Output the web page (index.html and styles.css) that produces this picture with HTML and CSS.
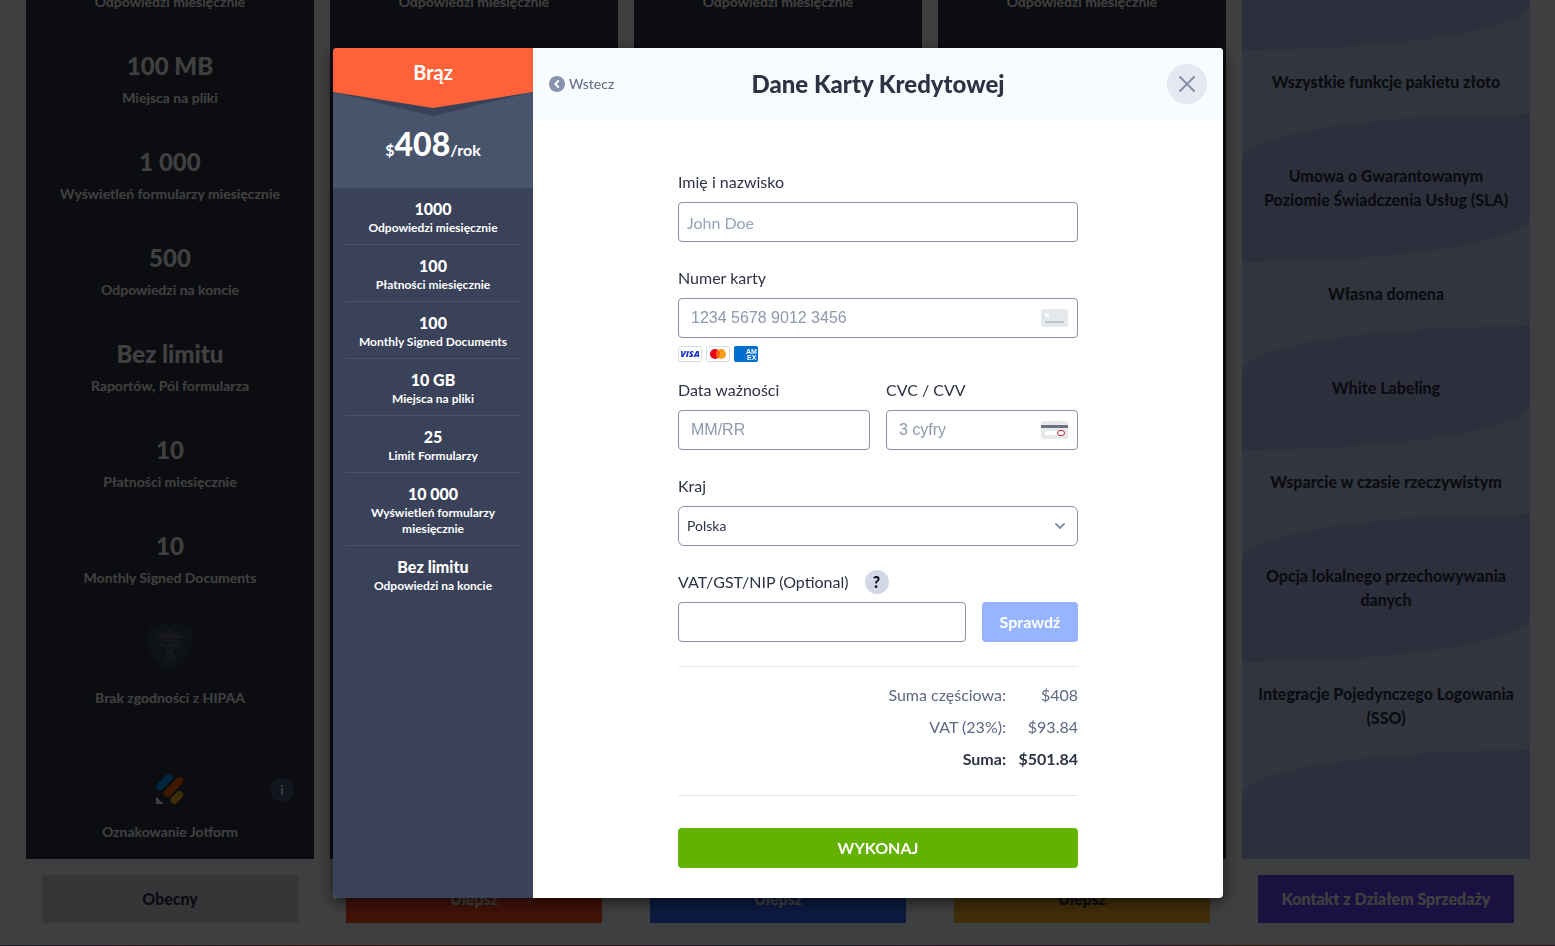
FILE: index.html
```
<!doctype html>
<html lang="pl">
  <head>
    <meta charset="UTF-8" />
    <meta name="viewport" content="width=device-width, initial-scale=1.0" />
    <title>Dane Karty Kredytowej</title>
    <link rel="stylesheet" href="styles.css">
  </head>
  <body>
    <!-- Plans table behind the modal -->
    <main class="plans">
      <section class="plan">
        <div class="plan-body">
          <div class="feature"><span class="feature-label">Odpowiedzi miesięcznie</span></div>
          <div class="feature"><strong class="feature-value">100 MB</strong><span class="feature-label">Miejsca na pliki</span></div>
          <div class="feature"><strong class="feature-value">1 000</strong><span class="feature-label">Wyświetleń formularzy miesięcznie</span></div>
          <div class="feature"><strong class="feature-value">500</strong><span class="feature-label">Odpowiedzi na koncie</span></div>
          <div class="feature"><strong class="feature-value">Bez limitu</strong><span class="feature-label">Raportów, Pól formularza</span></div>
          <div class="feature"><strong class="feature-value">10</strong><span class="feature-label">Płatności miesięcznie</span></div>
          <div class="feature"><strong class="feature-value">10</strong><span class="feature-label">Monthly Signed Documents</span></div>
          <div class="feature feature-hipaa">
            <svg class="hipaa-icon" width="44" height="48" viewBox="0 0 44 48">
              <path fill="#3a475a" d="M22 0 L44 6 V18 C44 32 35 43 22 48 C9 43 0 32 0 18 V6 Z"/>
              <circle cx="22" cy="10.5" r="2.6" fill="#5b6476"/>
              <path fill="#5b6476" d="M22 13 C19 10 16 9 14 11 C12 13 9 15 6 15 C9 17 17 17 21 17 V38 L22 39 L23 38 V17 C27 17 35 17 38 15 C35 15 32 13 30 11 C28 9 25 10 22 13 Z"/>
              <path fill="none" stroke="#5b6476" stroke-width="1.8" d="M20 19 C8 19 10 23 17 23.500 C24 24 27 26 25 29 C23 31 19 31 18 34 C17 36 18 38 20 38 M24 19 C36 19 34 23 27 23.500 C20 24 17 26 19 29 C21 31 25 31 26 34 C27 36 26 38 24 38"/>
            </svg>
            <span class="feature-label">Brak zgodności z HIPAA</span>
          </div>
          <div class="feature feature-brand">
            <svg class="brand-icon" width="28" height="30" viewBox="0 0 28 30">
              <g fill="none" stroke-width="7.600" stroke-linecap="round">
                <path stroke="#0099ff" d="M4 12.500 L13 3.800"/>
                <path stroke="#ff6100" d="M11.300 19.300 L23.300 7"/>
                <path stroke="#ffb629" d="M18.300 26 L23.300 21"/>
              </g>
              <path fill="#fff" d="M0 22.500 L7.500 30 H1.500 Q0 30 0 28.500 Z"/>
            </svg>
            <span class="feature-label">Oznakowanie Jotform</span>
            <button class="info-button" type="button">i</button>
          </div>
        </div>
        <div class="plan-footer"><button class="plan-button current" type="button">Obecny</button></div>
      </section>

      <section class="plan">
        <div class="plan-body">
          <div class="feature"><span class="feature-label">Odpowiedzi miesięcznie</span></div>
        </div>
        <div class="plan-footer"><button class="plan-button bronze" type="button">Ulepsz</button></div>
      </section>

      <section class="plan">
        <div class="plan-body">
          <div class="feature"><span class="feature-label">Odpowiedzi miesięcznie</span></div>
        </div>
        <div class="plan-footer"><button class="plan-button silver" type="button">Ulepsz</button></div>
      </section>

      <section class="plan">
        <div class="plan-body">
          <div class="feature"><span class="feature-label">Odpowiedzi miesięcznie</span></div>
        </div>
        <div class="plan-footer"><button class="plan-button gold" type="button">Ulepsz</button></div>
      </section>

      <section class="plan">
        <div class="plan-body enterprise">
          <div class="perk perk-first"></div>
          <div class="perk">Wszystkie funkcje pakietu złoto</div>
          <div class="perk wave">Umowa o Gwarantowanym Poziomie Świadczenia Usług (SLA)</div>
          <div class="perk">Własna domena</div>
          <div class="perk wave">White Labeling</div>
          <div class="perk">Wsparcie w czasie rzeczywistym</div>
          <div class="perk wave">Opcja lokalnego przechowywania danych</div>
          <div class="perk">Integracje Pojedynczego Logowania (SSO)</div>
          <div class="perk perk-last"></div>
        </div>
        <div class="plan-footer"><button class="plan-button contact" type="button">Kontakt z Działem Sprzedaży</button></div>
      </section>
    </main>
    <div class="page-line"></div>

    <!-- Modal -->
    <div class="overlay">
      <div class="modal" role="dialog" aria-labelledby="modal-title">
        <aside class="summary">
          <div class="summary-top">
            <div class="ribbon"><div class="ribbon-name">Brąz</div></div>
            <div class="price"><span>$</span><strong>408</strong><span>/rok</span></div>
          </div>
          <ul class="limits">
            <li><strong>1000</strong>Odpowiedzi miesięcznie</li>
            <li><strong>100</strong>Płatności miesięcznie</li>
            <li><strong>100</strong>Monthly Signed Documents</li>
            <li><strong>10 GB</strong>Miejsca na pliki</li>
            <li><strong>25</strong>Limit Formularzy</li>
            <li><strong>10 000</strong>Wyświetleń formularzy miesięcznie</li>
            <li><strong>Bez limitu</strong>Odpowiedzi na koncie</li>
          </ul>
        </aside>

        <div class="payment">
          <header class="payment-header">
            <button class="back-button" type="button">
              <svg width="16" height="16" viewBox="0 0 16 16">
                <circle cx="8" cy="8" r="8" fill="#8894ab"/>
                <path d="M9.300 5 L6.300 8 L9.300 11" fill="none" stroke="#fff" stroke-width="1.800" stroke-linecap="round" stroke-linejoin="round"/>
              </svg>
              Wstecz
            </button>
            <h1 class="payment-title" id="modal-title">Dane Karty Kredytowej</h1>
            <button class="close-button" type="button" aria-label="Zamknij">
              <svg width="16" height="16" viewBox="0 0 16 16">
                <path d="M1 1 L15 15 M15 1 L1 15" stroke="#8590aa" stroke-width="2" stroke-linecap="round"/>
              </svg>
            </button>
          </header>

          <form class="payment-form">
            <div class="field">
              <label for="name">Imię i nazwisko</label>
              <input class="input" id="name" type="text" placeholder="John Doe">
            </div>

            <div class="field field-card">
              <label for="card">Numer karty</label>
              <div class="input-wrap">
                <input class="input input-card" id="card" type="text" placeholder="1234 5678 9012 3456">
                <svg class="input-icon" width="27" height="18" viewBox="0 0 27 18">
                  <rect width="27" height="18" rx="3" fill="#e5e9ec"/>
                  <rect x="4" y="4" width="4" height="4" rx="1" fill="#fff"/>
                  <rect x="4" y="12" width="19" height="2" fill="#b9c4c9"/>
                </svg>
              </div>
              <div class="card-brands">
                <svg width="24" height="16" viewBox="0 0 24 16">
                  <rect x=".5" y=".5" width="23" height="15" rx="2" fill="#fff" stroke="#d6dcde"/>
                  <text class="visa" x="12" y="11" text-anchor="middle">VISA</text>
                </svg>
                <svg width="24" height="16" viewBox="0 0 24 16">
                  <rect x=".5" y=".5" width="23" height="15" rx="2" fill="#fff" stroke="#d6dcde"/>
                  <circle cx="9" cy="8" r="5" fill="#eb001b"/>
                  <circle cx="15" cy="8" r="5" fill="#f79e1b"/>
                  <path d="M12 4 A5 5 0 0 1 12 12 A5 5 0 0 1 12 4" fill="#ff5f00"/>
                </svg>
                <svg width="24" height="16" viewBox="0 0 24 16">
                  <rect width="24" height="16" rx="2" fill="#016fd0"/>
                  <text class="amex" x="12" y="8">AM</text>
                  <text class="amex" x="13" y="14">EX</text>
                </svg>
              </div>
            </div>

            <div class="field-row">
              <div class="field">
                <label for="expiry">Data ważności</label>
                <input class="input input-card" id="expiry" type="text" placeholder="MM/RR">
              </div>
              <div class="field">
                <label for="cvc">CVC / CVV</label>
                <div class="input-wrap">
                  <input class="input input-card" id="cvc" type="text" placeholder="3 cyfry">
                  <svg class="input-icon" width="27" height="18" viewBox="0 0 27 18">
                    <rect width="27" height="18" rx="3" fill="#e5e9ec"/>
                    <rect y="4" width="27" height="3" fill="#6b7280"/>
                    <rect x="4" y="10" width="14" height="4" fill="#fff"/>
                    <rect x="16.500" y="9.500" width="7" height="5" rx="2.500" fill="#fff" stroke="#c92a2f"/>
                  </svg>
                </div>
              </div>
            </div>

            <div class="field">
              <label for="country">Kraj</label>
              <div class="input-wrap">
                <select class="input select" id="country">
                  <option>Polska</option>
                </select>
                <svg class="select-arrow" width="12" height="8" viewBox="0 0 12 8">
                  <path d="M2 2 L6 6 L10 2" fill="none" stroke="#8894ab" stroke-width="2" stroke-linecap="round" stroke-linejoin="round"/>
                </svg>
              </div>
            </div>

            <div class="field">
              <div class="label-row">
                <label for="vat">VAT/GST/NIP (Optional)</label>
                <button class="help-button" type="button">?</button>
              </div>
              <div class="vat-row">
                <input class="input" id="vat" type="text">
                <button class="check-button" type="button">Sprawdź</button>
              </div>
            </div>

            <div class="totals">
              <table>
                <tr><th scope="row">Suma częściowa:</th><td>$408</td></tr>
                <tr><th scope="row">VAT (23%):</th><td>$93.84</td></tr>
                <tr class="total"><th scope="row">Suma:</th><td>$501.84</td></tr>
              </table>
            </div>

            <button class="submit-button" type="submit">WYKONAJ</button>
          </form>
        </div>
      </div>
    </div>
  </body>
</html>
```
FILE: styles.css
```
* {
  margin: 0;
  padding: 0;
  box-sizing: border-box;
}

body {
  font-family: Lato, "Open Sans", sans-serif;
  font-size: 16px;
  line-height: 24px;
  background: #f8fafd;
  color: #2c3345;
  overflow: hidden;
}

button,
input,
select {
  font: inherit;
}

button {
  border: none;
  cursor: pointer;
}

/* Plans */
.plans {
  display: grid;
  grid-template-columns: repeat(5, 1fr);
  gap: 16px;
  padding: 0 25px 0 26px;
  margin-top: -6px;
}

.plan {
  display: flex;
  flex-direction: column;
}

.plan-body {
  flex: 1;
  padding: 0 20px;
  background: #2c3442;
  color: #fff;
  text-align: center;
}

.feature {
  display: flex;
  flex-direction: column;
  align-items: center;
  gap: 8px;
  padding: 20px 0 19px;
  border-bottom: 1px solid #3c4454;
}

.feature:first-child {
  padding-top: 0;
}

.feature-value {
  font-size: 24px;
  line-height: 32px;
  font-weight: 900;
}

.feature-label {
  font-size: 14px;
  line-height: 16px;
  font-weight: bold;
}

.feature-hipaa {
  gap: 20px;
  padding: 16px 0 43px;
}

.feature-brand {
  position: relative;
  gap: 20px;
  padding: 24px 0 19px;
  border-bottom: none;
}

.info-button {
  position: absolute;
  top: 28px;
  right: 0;
  width: 24px;
  height: 24px;
  border-radius: 50%;
  background: #4a5473;
  color: #fff;
  font-size: 14px;
  font-weight: bold;
}

.plan-footer {
  padding: 16px 16px 22px;
}

.plan-button {
  width: 100%;
  height: 48px;
  font-weight: 900;
  color: #fff;
}

.plan-button.current {
  background: #d5d8e0;
  color: #2c3345;
}

.plan-button.bronze {
  background: #ff4b1f;
}

.plan-button.silver {
  background: #2e69ff;
}

.plan-button.gold {
  background: #ffb629;
  color: #2c3345;
}

.plan-button.contact {
  background: #6a44ff;
}

/* Enterprise column */
.enterprise {
  padding: 0;
  background: #c8d4f4;
  color: #2c3345;
  font-weight: 900;
}

.perk {
  padding: 20px 8px;
}

.wave,
.perk-first,
.perk-last {
  background: #b8bcf0;
}

.wave {
  padding: 50px 14px;
  border-radius: 100% 0 100% 0 / 46px 0 46px 0;
}

.perk-first {
  height: 56px;
  border-radius: 0 0 100% 0 / 0 0 46px 0;
}

.perk-last {
  height: 109px;
  border-radius: 100% 0 0 0 / 46px 0 0 0;
}

.page-line {
  height: 1px;
  background: linear-gradient(90deg, #5a6080, #d0304a 22%, #555a78 50%, #c04a80 75%, #d06a30 85%, #c04a80);
}

/* Modal */
.overlay {
  position: fixed;
  inset: 0;
  display: flex;
  align-items: center;
  justify-content: center;
  padding-left: 1px;
  background: rgba(0, 0, 0, 0.75);
}

.modal {
  display: grid;
  grid-template-columns: 200px 1fr;
  width: 890px;
  max-width: 100%;
  border-radius: 4px;
  overflow: hidden;
  background: #fff;
  box-shadow: 0 4px 16px rgba(0, 0, 0, 0.6);
}

.summary {
  background: #3a4259;
  color: #fff;
  text-align: center;
}

.summary-top {
  height: 140px;
  background: #48546b;
}

.ribbon {
  height: 68px;
  background: #3a4259;
  clip-path: polygon(0 0, 100% 0, 100% 44px, 50% 68px, 0 44px);
}

.ribbon-name {
  height: 60px;
  padding-top: 12px;
  background: #ff6138;
  clip-path: polygon(0 0, 100% 0, 100% 44px, 50% 60px, 0 44px);
  font-size: 20px;
  font-weight: bold;
}

.price {
  padding-top: 8px;
  line-height: 40px;
  font-weight: bold;
}

.price strong {
  font-size: 32px;
  font-weight: 900;
}

.limits {
  padding: 0 12px;
  list-style: none;
}

.limits li {
  padding: 12px 8px 8px;
  border-bottom: 1px solid #48546b;
  font-size: 12px;
  line-height: 16px;
  font-weight: bold;
}

.limits li:last-child {
  border-bottom: none;
}

.limits strong {
  display: block;
  margin-bottom: 2px;
  font-size: 16px;
  line-height: 18px;
  font-weight: 900;
}

.payment-header {
  display: grid;
  grid-template-columns: 1fr auto 1fr;
  align-items: center;
  height: 72px;
  padding: 0 16px;
  background: #f8fbff;
}

.back-button {
  display: flex;
  align-items: center;
  justify-self: start;
  gap: 4px;
  background: none;
  color: #5d6885;
  font-size: 14px;
}

.payment-title {
  font-size: 24px;
  line-height: 32px;
  font-weight: 900;
}

.close-button {
  display: flex;
  align-items: center;
  justify-content: center;
  justify-self: end;
  width: 40px;
  height: 40px;
  border-radius: 50%;
  background: #e4e8f0;
}

/* Form */
.payment-form {
  width: 400px;
  max-width: 100%;
  margin: 0 auto;
  padding: 50px 0 30px;
}

.field {
  display: flex;
  flex-direction: column;
  gap: 8px;
  margin-bottom: 24px;
}

.field-card {
  margin-bottom: 16px;
}

.field-row {
  display: grid;
  grid-template-columns: 1fr 1fr;
  gap: 16px;
}

.input {
  width: 100%;
  height: 40px;
  padding: 0 8px;
  border: 1px solid #8894ab;
  border-radius: 4px;
  background: #fff;
  color: #2c3345;
}

.input::placeholder {
  color: #97a3bb;
}

.input-card {
  padding: 0 12px;
  font-family: "Liberation Sans", Arial, sans-serif;
}

.input-card::placeholder {
  color: #8c99b0;
}

.input-wrap {
  position: relative;
}

.input-icon {
  position: absolute;
  top: 11px;
  right: 10px;
}

.select {
  appearance: none;
  border-radius: 6px;
  font-size: 14px;
}

.select-arrow {
  position: absolute;
  top: 16px;
  right: 12px;
  pointer-events: none;
}

.card-brands {
  display: flex;
  gap: 4px;
}

.visa {
  font: italic 900 9px "Open Sans", sans-serif;
  fill: #1a2fc4;
}

.amex {
  font: bold 7px "Liberation Sans", Arial, sans-serif;
  fill: #fff;
}

.label-row {
  display: flex;
  gap: 16px;
}

.help-button {
  width: 24px;
  height: 24px;
  border-radius: 50%;
  background: #d3d8e6;
  color: #0a0d14;
  font-weight: 900;
}

.vat-row {
  display: flex;
  gap: 16px;
}

.check-button {
  flex: 0 0 96px;
  border-radius: 4px;
  background: #97b4ff;
  color: #fff;
  font-weight: bold;
}

.totals {
  margin-bottom: 32px;
  padding: 12px 0 20px;
  border-top: 1px solid #e4e8f0;
  border-bottom: 1px solid #e4e8f0;
}

.totals table {
  width: 100%;
  border-collapse: collapse;
  color: #5d6885;
  line-height: 32px;
  text-align: right;
}

.totals th {
  font-weight: normal;
}

.totals td {
  width: 72px;
}

.totals .total,
.totals .total th {
  color: #2c3345;
  font-weight: bold;
}

.submit-button {
  display: block;
  width: 100%;
  height: 40px;
  border-radius: 4px;
  background: #64b200;
  color: #fff;
  font-weight: bold;
}
```
